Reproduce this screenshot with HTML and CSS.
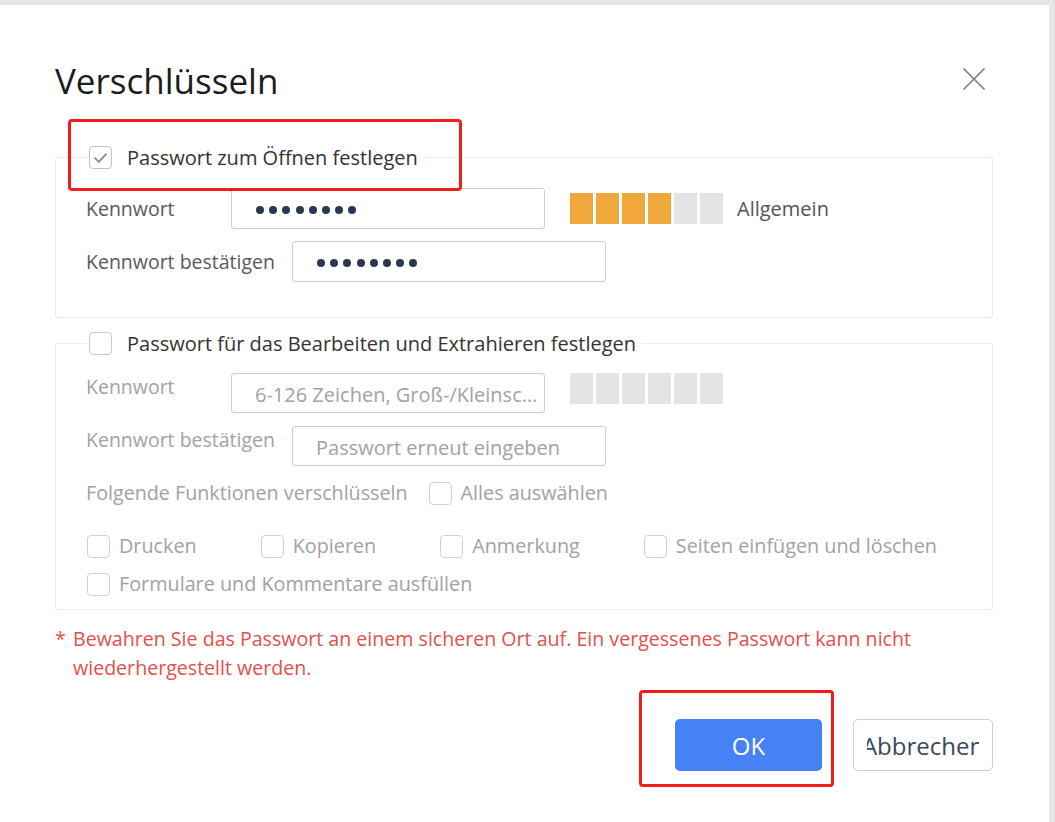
FILE: index.html
```html
<!DOCTYPE html>
<html lang="de">
<head>
<meta charset="utf-8">
<title>Verschlüsseln</title>
<link rel="stylesheet" href="styles.css">
</head>
<body>
<div class="dialog">
  <div class="header">
    <h1 class="title">Verschlüsseln</h1>
    <button class="close" aria-label="Schließen">
      <svg width="24" height="24" viewBox="0 0 24 24"><path d="M1.5 1.5 L22.5 22.5 M22.5 1.5 L1.5 22.5" stroke="#7b7b7b" stroke-width="1.6" fill="none"/></svg>
    </button>
  </div>

  <fieldset class="group group-open">
    <legend class="legend">
      <span class="cb cb-checked"><svg width="15" height="12" viewBox="0 0 15 12"><path d="M2 6.2 L5.8 9.8 L13 2.2" stroke="#8189aa" stroke-width="1.8" fill="none" stroke-linecap="round" stroke-linejoin="round"/></svg></span>
      <span>Passwort zum Öffnen festlegen</span>
    </legend>
    <div class="row">
      <span class="label label-short">Kennwort</span>
      <div class="field"><span class="dots"><i></i><i></i><i></i><i></i><i></i><i></i><i></i><i></i></span></div>
      <div class="meter"><span class="on"></span><span class="on"></span><span class="on"></span><span class="on"></span><span></span><span></span></div>
      <span class="meter-label">Allgemein</span>
    </div>
    <div class="row">
      <span class="label label-long">Kennwort bestätigen</span>
      <div class="field"><span class="dots"><i></i><i></i><i></i><i></i><i></i><i></i><i></i><i></i></span></div>
    </div>
  </fieldset>

  <fieldset class="group group-edit">
    <legend class="legend">
      <span class="cb"></span>
      <span>Passwort für das Bearbeiten und Extrahieren festlegen</span>
    </legend>
    <div class="row">
      <span class="label label-short disabled">Kennwort</span>
      <div class="field field-small"><span class="placeholder">6-126 Zeichen, Groß-/Kleinsc...</span></div>
      <div class="meter"><span></span><span></span><span></span><span></span><span></span><span></span></div>
    </div>
    <div class="row">
      <span class="label label-long disabled">Kennwort bestätigen</span>
      <div class="field field-small"><span class="placeholder">Passwort erneut eingeben</span></div>
    </div>
    <div class="funcs">
      <span class="disabled">Folgende Funktionen verschlüsseln</span>
      <span class="option option-all"><span class="cb cb-disabled"></span><span class="disabled">Alles auswählen</span></span>
    </div>
    <div class="options">
      <span class="option"><span class="cb cb-disabled"></span><span class="disabled">Drucken</span></span>
      <span class="option"><span class="cb cb-disabled"></span><span class="disabled">Kopieren</span></span>
      <span class="option"><span class="cb cb-disabled"></span><span class="disabled">Anmerkung</span></span>
      <span class="option"><span class="cb cb-disabled"></span><span class="disabled">Seiten einfügen und löschen</span></span>
      <span class="option"><span class="cb cb-disabled"></span><span class="disabled">Formulare und Kommentare ausfüllen</span></span>
    </div>
  </fieldset>

  <div class="note">
    <span class="star">*</span>
    <p>Bewahren Sie das Passwort an einem sicheren Ort auf. Ein vergessenes Passwort kann nicht wiederhergestellt werden.</p>
  </div>

  <div class="footer">
    <button class="btn btn-primary">OK</button>
    <button class="btn btn-default"><span class="btn-clip">Abbrechen</span></button>
  </div>

  <div class="mark mark-open"></div>
  <div class="mark mark-ok"></div>
</div>
</body>
</html>
```
FILE: styles.css
```css
html, body {
  margin: 0;
  padding: 0;
}
body {
  background: #e6e6e6;
  font-family: "Open Sans", "Noto Sans", sans-serif;
  overflow: hidden;
}
.dialog {
  position: relative;
  margin-top: 5px;
  width: 1049px;
  height: 817px;
  box-sizing: border-box;
  background: #fff;
  padding: 0 56px 0 55px;
}
.header {
  display: flex;
  justify-content: space-between;
  align-items: flex-start;
  padding-top: 55px;
}
.title {
  margin: 0;
  font-size: 35px;
  line-height: 42px;
  font-weight: 400;
  color: #1c1c1c;
}
.close {
  margin: 7px 7px 0 0;
  padding: 0;
  border: 0;
  background: none;
  width: 24px;
  height: 24px;
}
.close svg { display: block; }

.group {
  margin: 42px 0 0;
  border: 1px solid #ebebeb;
  border-radius: 2px;
  padding: 17px 30px 35px;
  min-width: 0;
}
.group-edit {
  margin-top: 12px;
  padding-top: 16px;
  padding-bottom: 12px;
}
.legend {
  padding: 0 6px 0 3px;
  display: flex;
  align-items: center;
  gap: 15px;
  font-size: 20px;
  line-height: 27px;
  color: #333;
}
.cb {
  display: inline-flex;
  align-items: center;
  justify-content: center;
  width: 23px;
  height: 23px;
  box-sizing: border-box;
  border: 1.5px solid #c6c9d4;
  border-radius: 4px;
  background: #fff;
  flex: none;
}
.cb-checked {
  border-color: #bcc1d2;
}
.cb-checked svg { display: block; }
.cb-disabled {
  border-color: #cfd2da;
}

.row {
  display: flex;
  align-items: center;
}
.row + .row {
  margin-top: 12px;
}
.group-edit .row {
  align-items: flex-start;
}
.group-edit .row + .row {
  margin-top: 13px;
}
.group-edit .label {
  margin-top: 1px;
}
.label {
  font-size: 19.5px;
  line-height: 26px;
  color: #595959;
  flex: none;
}
.label-short { width: 145px; }
.label-long { width: 206px; }
.disabled {
  color: #a2a2a2;
}
.field {
  width: 314px;
  height: 41px;
  box-sizing: border-box;
  border: 1px solid #cdcdcd;
  border-radius: 3px;
  padding-left: 24px;
  display: flex;
  align-items: center;
  flex: none;
}
.field-small {
  height: 40px;
  padding-left: 23px;
}
.dots {
  display: flex;
  gap: 5.2px;
  margin-top: 2px;
}
.dots i {
  width: 8px;
  height: 8px;
  border-radius: 50%;
  background: #2a3856;
}
.placeholder {
  font-size: 20px;
  line-height: 26px;
  color: #a2a2a2;
  white-space: nowrap;
  margin-top: 4px;
}
.meter {
  display: flex;
  gap: 3px;
  margin-left: 25px;
}
.meter span {
  width: 23px;
  height: 31px;
  background: #e4e4e4;
}
.meter .on {
  background: #f0a73b;
}
.meter-label {
  margin-left: 14px;
  font-size: 20px;
  line-height: 26px;
  color: #555;
}

.funcs {
  display: flex;
  align-items: center;
  margin-top: 14px;
  font-size: 19.7px;
  line-height: 26px;
  gap: 21px;
}
.option {
  display: inline-flex;
  align-items: center;
  gap: 9px;
  font-size: 19.8px;
  line-height: 26px;
}
.options {
  display: flex;
  flex-wrap: wrap;
  column-gap: 64px;
  row-gap: 12px;
  margin-top: 27px;
  margin-left: 1px;
}

.note {
  display: flex;
  margin-top: 14px;
  color: #e4504b;
  font-size: 19.6px;
  line-height: 29px;
}
.star {
  width: 18px;
  flex: none;
}
.note p {
  margin: 0;
}

.footer {
  display: flex;
  justify-content: flex-end;
  gap: 31px;
  margin-top: 37px;
}
.btn {
  height: 52px;
  border-radius: 5px;
  font-family: "Open Sans", "Noto Sans", sans-serif;
  font-size: 24px;
  display: flex;
  align-items: center;
  justify-content: center;
  box-sizing: border-box;
  padding: 0;
}
.btn-primary {
  width: 147px;
  background: #4781f6;
  border: 0;
  color: #fff;
}
.btn-default {
  width: 140px;
  background: #fff;
  border: 1px solid #cdcdcd;
  color: #3b475c;
}
.btn-clip {
  display: flex;
  justify-content: center;
  width: 112px;
  overflow: hidden;
  white-space: nowrap;
}

.mark {
  position: absolute;
  box-sizing: border-box;
  border: 3px solid #f21d1b;
  border-radius: 4px;
}
.mark-open {
  left: 68px;
  top: 114px;
  width: 394px;
  height: 72px;
}
.mark-ok {
  left: 639px;
  top: 685px;
  width: 195px;
  height: 97px;
}
```
